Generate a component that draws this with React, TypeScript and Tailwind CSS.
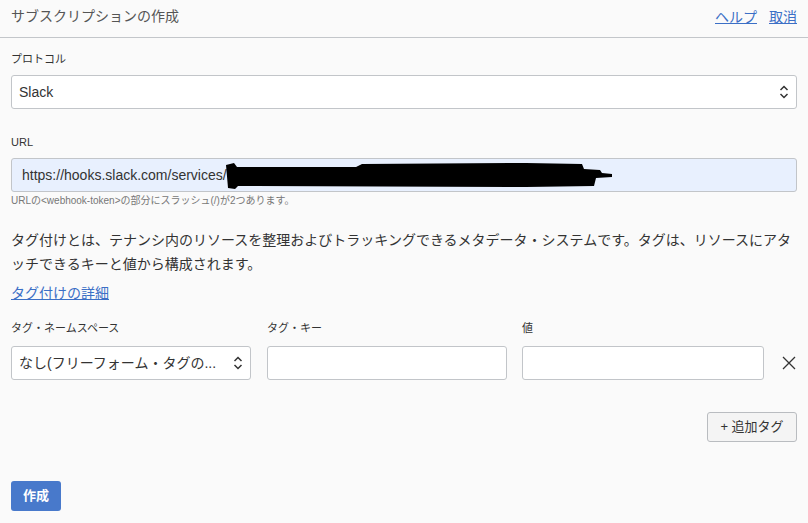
import React from 'react';

const font = { fontFamily: '"Liberation Sans", "Noto Sans CJK JP", sans-serif' };

function Chevrons() {
    return (
        <svg width="10" height="16" viewBox="0 0 10 16" fill="none" stroke="#333" strokeWidth="1.5" className="shrink-0">
            <path d="M1.5 6 L5 2.5 L8.5 6" />
            <path d="M1.5 10 L5 13.5 L8.5 10" />
        </svg>
    );
}

function Redaction() {
    return (
        <svg width="386" height="30" viewBox="0 0 386 30" className="shrink-0 -ml-[1px]">
            <path
                d="M0 5 L8 3 L11 7 L130 7 L136 4 L300 3 L356 4 L358 9 L374 10 L376 13 L386 14 L386 17 L370 18 L368 26 L300 27 L12 26 L9 29 L2 28 Z"
                fill="#000"
            />
        </svg>
    );
}

export default function App() {
    return (
        <div className="min-h-screen w-[808px] bg-[#fafafa] text-[#333]" style={font}>
            <div className="h-[38px] border-b border-[#c3c6ca] flex items-start justify-between px-[11px] pt-[6px]">
                <h1 className="text-[14px] leading-[20px] text-[#555]">サブスクリプションの作成</h1>
                <div className="flex gap-[12px] text-[14px] leading-[20px] pt-[1px]">
                    <a className="text-[#3b6fc6] underline">ヘルプ</a>
                    <a className="text-[#3b6fc6] underline">取消</a>
                </div>
            </div>

            <div className="px-[11px] flex flex-col">
                <label className="mt-[13px] h-[16px] leading-[16px] text-[11px] text-[#333]">プロトコル</label>
                <div className="mt-[8px] h-[34px] w-[786px] bg-white border border-[#c2c5c9] rounded-[3px] flex items-center justify-between pl-[7px] pr-[7px]">
                    <span className="text-[14px]">Slack</span>
                    <Chevrons />
                </div>

                <label className="mt-[25px] h-[16px] leading-[16px] text-[11px] text-[#333]">URL</label>
                <div className="mt-[8px] h-[34px] w-[786px] bg-[#e8f0fe] border border-[#c2c5c9] rounded-[3px] flex items-center pl-[10px] overflow-hidden">
                    <span className="text-[14px] whitespace-nowrap">https://hooks.slack.com/services/</span>
                    <Redaction />
                </div>
                <p className="mt-[1px] h-[16px] leading-[16px] text-[10px] text-[#777]">
                    URLの&lt;webhook-token&gt;の部分にスラッシュ(/)が2つあります。
                </p>

                <p className="mt-[19px] text-[14px] leading-[24px] text-[#333] whitespace-nowrap">
                    タグ付けとは、テナンシ内のリソースを整理およびトラッキングできるメタデータ・システムです。タグは、リソースにアタ
                    <br />
                    ッチできるキーと値から構成されます。
                </p>
                <a className="mt-[7px] h-[20px] leading-[20px] text-[14px] text-[#3b6fc6] underline w-fit">タグ付けの詳細</a>

                <div className="mt-[17px] flex items-start">
                    <div className="w-[240px] shrink-0 mr-[16px] flex flex-col">
                        <label className="h-[16px] leading-[16px] text-[11px]">タグ・ネームスペース</label>
                        <div className="mt-[10px] h-[34px] bg-white border border-[#c2c5c9] rounded-[3px] flex items-center justify-between pl-[7px] pr-[7px]">
                            <span className="text-[14px] text-[#333] truncate">なし(フリーフォーム・タグの...</span>
                            <Chevrons />
                        </div>
                    </div>
                    <div className="w-[240px] shrink-0 mr-[15px] flex flex-col">
                        <label className="h-[16px] leading-[16px] text-[11px]">タグ・キー</label>
                        <div className="mt-[10px] h-[34px] bg-white border border-[#c2c5c9] rounded-[3px]" />
                    </div>
                    <div className="w-[242px] shrink-0 flex flex-col">
                        <label className="h-[16px] leading-[16px] text-[11px]">値</label>
                        <div className="mt-[10px] h-[34px] bg-white border border-[#c2c5c9] rounded-[3px]" />
                    </div>
                    <div className="mt-[26px] h-[34px] w-[49px] shrink-0 flex items-center justify-center">
                        <svg width="14" height="14" viewBox="0 0 14 14" stroke="#333" strokeWidth="1.3">
                            <path d="M1 1 L13 13 M13 1 L1 13" />
                        </svg>
                    </div>
                </div>

                <div className="mt-[32px] flex justify-end">
                    <button className="h-[30px] w-[90px] bg-[#f4f4f4] border border-[#b9bcc0] rounded-[3px] text-[13px] text-[#333]">
                        + 追加タグ
                    </button>
                </div>

                <div className="mt-[39px]">
                    <button className="h-[30px] w-[50px] bg-[#4879cb] rounded-[3px] text-[13px] font-bold text-white">作成</button>
                </div>
            </div>
        </div>
    );
}
